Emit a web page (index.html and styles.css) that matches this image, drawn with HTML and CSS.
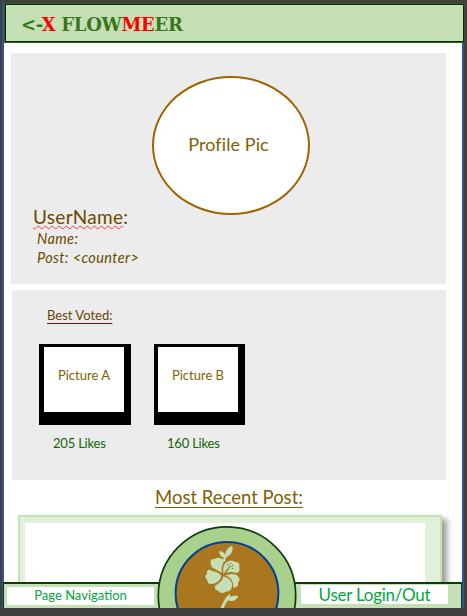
FILE: index.html
```html
<!DOCTYPE html>
<html lang="en">
<head>
<meta charset="utf-8">
<title>Flowmeer</title>
<link rel="stylesheet" href="styles.css">
</head>
<body>
<div class="page">
  <header class="header"><h1 class="brand">&lt;-<span class="red">X</span> FLOW<span class="red">ME</span>ER</h1></header>
  <main class="content">
    <section class="profile">
      <div class="avatar"><span class="avatar-label">Profile Pic</span></div>
      <h2 class="username"><span class="misspelled">UserName</span>:</h2>
      <p class="detail detail-name">Name:</p>
      <p class="detail detail-post">Post: &lt;counter&gt;</p>
    </section>
    <section class="voted">
      <h3 class="voted-title">Best Voted:</h3>
      <div class="pictures">
        <div class="item">
          <div class="frame"><div class="photo"><span>Picture A</span></div></div>
          <p class="likes">205 Likes</p>
        </div>
        <div class="item item-b">
          <div class="frame"><div class="photo"><span>Picture B</span></div></div>
          <p class="likes">160 Likes</p>
        </div>
      </div>
    </section>
    <h2 class="recent"><span class="recent-label">Most Recent Post:</span></h2>
    <section class="post"><div class="post-body"></div></section>
  </main>
  <footer class="footer">
    <a class="nav nav-page"><span>Page Navigation</span></a>
    <a class="nav nav-user"><span>User Login/Out</span></a>
    <svg class="emblem" viewBox="157 525 140 83" width="140" height="83">
      <circle cx="227" cy="595.5" r="68.7" fill="#a9d18e" stroke="#0d3c0a" stroke-width="1.7"/>
      <circle cx="227" cy="593.3" r="51.4" fill="#aa761e" stroke="#003f9a" stroke-width="2"/>
      <g fill="#c5e0b4">
        <path d="M225 557.5C225 552 227 547.500 232.300 545.800C233.500 551 231 555.500 226.500 557Z"/>
        <path d="M225.300 557.800C220.500 557.500 219 554.500 219.500 551C223.500 551.500 225.800 554 225.300 557.800Z"/>
        <path d="M224.500 556L226.500 556.500C225.500 559 225 560 225.500 562L222.500 560Z"/>
        <path d="M221.800 573C214 567.500 210.500 568.500 210.500 562C211 559 213 559 215 559C218 556.500 222 558.500 224.300 561C222 565 221 569 221.800 573Z"/>
        <path d="M223.500 574C222.500 567 224 563 228 561.500C231 559.500 233 560.500 235 562C238.500 561.500 240 564 239.200 567C240.500 570 238.500 573 236 573C231 571 228 572 223.500 574Z"/>
        <path d="M225 575.500C231 573 237 573.500 238.500 577C240.500 579 239 581 238 583C238.500 586.500 236 588 233 587.500C234 582 231 577 225 575.500Z"/>
        <path d="M223 576.500C230 577.500 234 583 231.500 588C230 592.500 227 590.500 224.500 592.500C221 594.500 219 591.500 218 590.500C214.500 590 214 587 216 585C220 583 223 580 223 576.500Z"/>
        <path d="M221.300 575.500C221 580 216.500 584 211 584C208 584.500 208 581.500 206.500 579C204.500 577 205 575.500 207 574C206.500 571 208 569 210 570C213 572 217 571 221.300 575.500Z"/>
        <path d="M220.500 608C223.500 602 225 597 230 594L230.500 596.500L228.500 600C226 603 224.500 605 224 608Z"/>
        <path d="M228.500 600.500C228.500 596.500 233 595 238.300 596C236.500 600.500 232.500 602 228.500 600.500Z"/>
      </g>
      <g fill="#aa761e">
        <path d="M223.800 573.500L229 566.500L230 567.200L225 574.500Z"/>
        <circle cx="228" cy="565" r=".8"/><circle cx="230.500" cy="563.500" r=".8"/><circle cx="232.500" cy="565.500" r=".8"/><circle cx="230.500" cy="566.500" r=".8"/><circle cx="232.500" cy="568.500" r=".8"/>
      </g>
    </svg>
  </footer>
</div>
</body>
</html>
```
FILE: styles.css
```css
* { box-sizing: border-box; }
body {
  margin: 0;
  padding: 3px 3px 8px 2px;
  height: 616px;
  overflow: hidden;
  background: #404040;
  font-family: Lato, "Liberation Sans", sans-serif;
}
h1, h2, h3, p { margin: 0; font-weight: 400; white-space: nowrap; }
.page {
  display: flex;
  flex-direction: column;
  height: 605px;
  background: #fff;
  border: solid #2f5597;
  border-width: 0 2px;
}
.header {
  flex: none;
  height: 40px;
  margin-right: -3px;
  padding-left: 16px;
  background: #c5e0b4;
  border: 1px solid #385723;
  box-shadow: inset 0 0 0 1px #003300;
}
.brand {
  font: bold 18px/41px "DejaVu Serif", serif;
  letter-spacing: -.3px;
  color: #38761d;
}
.red { color: #f00; }
.content { flex: 1; min-height: 0; padding: 10px 16px 0 7px; overflow: hidden; }
.profile { height: 231px; padding: 23px 0 0 22px; background: #ececec; color: #6b4a00; }
.avatar {
  width: 158px;
  height: 139px;
  margin-left: 119px;
  padding-right: 5px;
  border: 2px solid #9c6500;
  border-radius: 50%;
  background: #fff;
  text-align: center;
  font-size: 18px;
  line-height: 132px;
  letter-spacing: .1px;
  font-variant-ligatures: none;
  color: #7f6000;
}
.username { height: 24px; margin-top: -10px; font-size: 19px; line-height: 24px; letter-spacing: .3px; }
.misspelled { text-decoration: underline wavy #f33 1px; text-underline-offset: 1px; }
.detail { padding-left: 4px; font-size: 14.500px; line-height: 19px; font-style: italic; letter-spacing: .4px; }
.voted { height: 190px; margin: 6px 0 0 1px; padding: 17px 0 0 27px; background: #ececec; color: #7f6000; }
.voted-title { margin-left: 8px; font-size: 13px; line-height: 17px; color: #664600; text-decoration: underline #701010 1px; text-underline-offset: 3px; }
.pictures { display: flex; gap: 23px; margin-top: 20px; }
.frame { width: 92px; height: 81px; padding: 3px 0 0 5px; background: #000; }
.item-b .frame { width: 91px; padding-left: 4px; }
.photo { width: 80px; height: 65px; background: #fff; text-align: center; font-size: 13px; line-height: 57px; }
.likes { padding-left: 14px; margin-top: 10px; font-size: 13px; line-height: 17px; letter-spacing: -.2px; color: #146400; }
.item-b .likes { padding-left: 13px; }
.recent { height: 35px; padding: 5px 0 0 144px; font-size: 18.500px; line-height: 24px; color: #7f6000; }
.recent-label { text-decoration: underline 1px; text-underline-offset: 3px; }
.post {
  width: 424px;
  height: 100px;
  margin-left: 7px;
  padding: 6px 15px 0 5px;
  background: #e2efd9;
  border: 2px solid #c5e0b4;
  box-shadow: 5px 4px 6px rgba(0, 0, 0, .4);
}
.post-body { height: 90px; background: #fff; }
.footer {
  position: relative;
  z-index: 1;
  flex: none;
  display: flex;
  justify-content: space-between;
  height: 26px;
  margin-left: -1px;
  padding: 1px 13px 0 3px;
  background: #c5e0b4;
  border: solid #0d3c0a;
  border-width: 2px 1px 0;
}
.nav { width: 147px; background: #fff; text-align: center; color: #00a83e; white-space: nowrap; }
.nav-page { height: 18px; margin-top: 2px; font-size: 13px; line-height: 17px; }
.nav-user { height: 19px; font-size: 17px; line-height: 20px; letter-spacing: -.25px; }
.emblem { position: absolute; left: 153px; bottom: 0; }
```
